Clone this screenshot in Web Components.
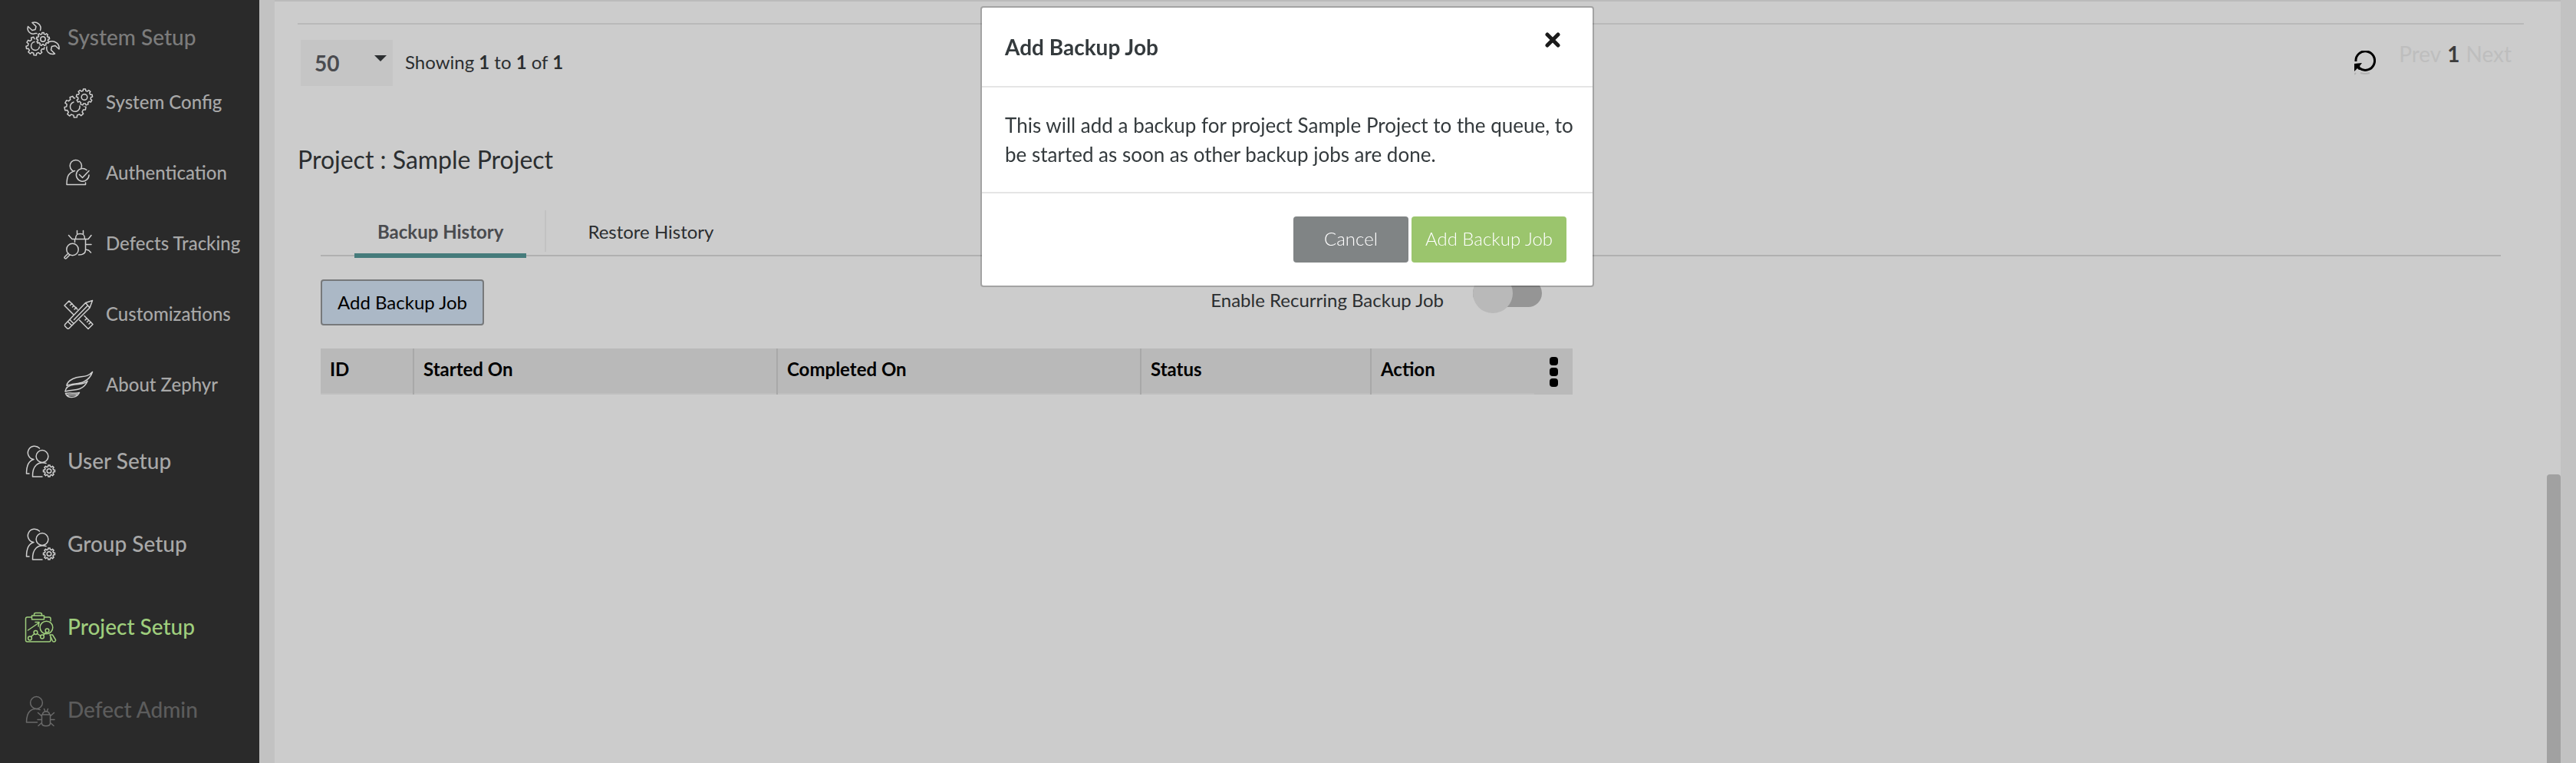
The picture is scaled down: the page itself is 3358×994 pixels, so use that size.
<!DOCTYPE html>
<html lang="en">
<head>
  <meta charset="UTF-8">
  <meta name="viewport" content="width=device-width, initial-scale=1.0">
  <title>Project Setup</title>
  <style>
    :root {
      --color-page: #ccc;
      --color-rail: #c2c2c2;
      --color-side: #2a2a2a;
      --color-side-text: #a8a8a8;
      --color-green: #9fce7d;
      --color-text: #2b2e30;
      --color-line: #b9b9b9;
      --fs-small: 24px;
      --fs-medium: 28px;
      --fs-large: 32px;
    }

    body {
      margin: 0;
      background-color: var(--color-page);
      color: var(--color-text);
      font-family: Lato, "Liberation Sans", sans-serif;
      font-size: var(--fs-small);
    }
  </style>
</head>
<body>
  <app-shell>
    <side-nav slot="nav">
      <nav-item icon="tools" class="first" style="--item-color: #7c7c7c">System Setup</nav-item>
      <nav-item icon="gears" sub>System Config</nav-item>
      <nav-item icon="auth" sub>Authentication</nav-item>
      <nav-item icon="defects" sub>Defects Tracking</nav-item>
      <nav-item icon="custom" sub>Customizations</nav-item>
      <nav-item icon="zephyr" sub>About Zephyr</nav-item>
      <nav-item icon="users">User Setup</nav-item>
      <nav-item icon="users">Group Setup</nav-item>
      <nav-item icon="project" style="--item-color: var(--color-green); --icon-color: var(--color-green)">Project Setup</nav-item>
      <nav-item icon="admin" style="--item-color: #5c5c5c; --icon-color: #6a6a6a">Defect Admin</nav-item>
    </side-nav>
    <list-pager></list-pager>
    <project-backups name="Sample Project">
      <tab-bar>
        <tab-item active>Backup History</tab-item>
        <tab-item>Restore History</tab-item>
      </tab-bar>
      <backup-toolbar></backup-toolbar>
      <backup-table></backup-table>
    </project-backups>
  </app-shell>

  <confirm-modal data-title="Add Backup Job">
    This will add a backup for project Sample Project to the queue, to be started as soon as other backup jobs are done.
  </confirm-modal>

  <script>
    const baseStyle = `
      :host,
      *,
      *::before,
      *::after {
        box-sizing: border-box;
      }

      *,
      *::before,
      *::after {
        margin: 0;
        padding: 0;
      }

      button,
      select {
        border: none;
        background: none;
        color: inherit;
        font: inherit;
        cursor: pointer;
      }
    `;

    function render(host, css, html) {
      const shadowRoot = host.attachShadow({ mode: "open" });
      shadowRoot.innerHTML = `<style>${baseStyle}${css}</style>${html}`;
      return shadowRoot;
    }

    // Outline of a cog wheel
    function gear(cx, cy, inner, outer, teeth, turn = 0) {
      const step = (Math.PI * 2) / teeth;
      const points = [];
      for (let i = 0; i < teeth; i++) {
        const mid = i * step + turn;
        [
          [inner, -0.3],
          [outer, -0.2],
          [outer, 0.2],
          [inner, 0.3],
        ].forEach(([r, offset]) => {
          const a = mid + offset * step;
          points.push(`${(cx + r * Math.cos(a)).toFixed(2)} ${(cy + r * Math.sin(a)).toFixed(2)}`);
        });
      }
      return `<path d="M${points.join("L")}Z"/>`;
    }

    const icons = {
      tools: `
        ${gear(14, 33, 9.5, 12, 9, 0.2)}
        <path d="M13 27.500a5.500 5.500 0 1 0 6.500 6"/>
        <circle class="gap" cx="24" cy="24" r="10.500"/>
        ${gear(24, 24, 6.8, 8.6, 9, -1.57)}
        <circle cx="24" cy="24" r="3.200"/>
        <path d="M10 2.500c6-2 13 3 10.500 10M4.500 7.500c-2 6 4 11.500 9.500 9h2M10 2.500l5 5-1 4-4 1-5.500-5"/>
        <path d="M32 27.500c7-3 14 3 13 9.500l-5-4.500-4.500 1-1 4.500 5 5c-7 2-12-3-10.500-9"/>`,
      gears: `
        ${gear(16, 25, 11.3, 14, 9, 0.15)}
        <path d="M14 19a6.300 6.300 0 1 0 8 5"/>
        <circle class="gap" cx="28" cy="12.500" r="12"/>
        ${gear(28, 12.5, 8.5, 10.6, 9, -1.57)}
        <circle cx="28" cy="12.500" r="3.800"/>`,
      auth: `
        <path d="M24 12.500a7.600 7.600 0 1 0-10 4.600C8 19 5 23 5 34.500h24.500V32M14 17.100l1.500-.6"/>
        <path d="M31 15.500a8.300 8.300 0 1 0 3 6.500"/>
        <path d="M21.500 21.500l4 4 8.500-9"/>`,
      defects: `
        <path d="M18.500 2.500v4M26.500 2.500v4M16.500 13.500c0-5 1.500-7 6-7s6 2 6 7M7.500 8.500l4.500 5h21l4-5M15.500 13.500v4M29.500 13.500v14c0 4-3 6.500-9 6.500M29.500 20.500H37M29.500 27l4 1 3 3"/>
        <circle cx="12.500" cy="27" r="7.700"/>
        <path d="M7 32l-4.500 4.500a1.200 1.200 0 0 0 2 2L9 34"/>`,
      custom: `
        <path d="M8 2L2 8l12 12M8 2l11 11M21.500 27L33 38.500l6-6L28 21.500M9.500 7.500l2.500-2M12.500 10l1.500-1.500M15 13l2.500-2.500M29 27l2-2M31.500 29.500l1.500-1.500M34 32l2.500-2.500"/>
        <path d="M38.500 1.500l-9 3L2.800 32.500a2 2 0 0 0 0 2.500l2.500 2.500a2 2 0 0 0 3 0L35 11zM29.500 4.500L35 11M6.500 29l5 5M9 26.500l5 5M14.500 26.500L31.500 9"/>`,
      zephyr: `
        <path d="M38.500 2.500C31 11 23 7 13 11.500 8 14 5 17 5 20.500c6-3 16-2 22-5s10-8 11.500-13z"/>
        <path d="M32 14.500c-4 4.500-10 3.500-17 4.500C8 20 3.500 22 3 28c7-2.500 13-1 19-3.500 5-2 8-5 10-10z"/>
        <path d="M21.500 29.500c-5 2-12-.5-18 1 1 3 4 5 8 5s8-2 10-6zM6 32.500c4 0 9 .5 12.500-.5"/>`,
      users: `
        <path d="M19.500 5a8.700 8.700 0 1 0-7.500 14.500C6 21 2.500 27 2.500 38H6"/>
        <circle cx="23" cy="15.500" r="7.900"/>
        <path d="M28 24.500c-10-3-18 3-17.500 17.500H23"/>
        ${gear(32, 34.5, 5.8, 7.6, 8)}
        <circle cx="32" cy="34.500" r="2.800"/>`,
      project: `
        <path d="M9 9H3.500a2 2 0 0 0-2 2v28a2 2 0 0 0 2 2H32a2 2 0 0 0 2-2v-4M26 9h6a2 2 0 0 1 2 2v3"/>
        <path d="M9.500 7h16v5h-16zM12.500 7V5.500a2 2 0 0 1 2-2h6a2 2 0 0 1 2 2V7"/>
        <path d="M4.500 26l14-9.500M14 15.500h5l-1 5.500"/>
        <circle cx="7" cy="36.500" r="2.400"/><circle cx="14.500" cy="29" r="2.400"/><circle cx="23" cy="34.500" r="2.400"/><circle cx="29.500" cy="26.500" r="2.400"/>
        <path d="M8.500 34.500l4.500-4M16.500 30.500l4.500 3M24.500 32.500l4-4"/>
        <circle cx="28.500" cy="22.500" r="8.300"/>
        <path d="M33 32l3.500 8c1 2 4.500 1 4-1.500l-4-6.500z"/>`,
      admin: `
        <circle cx="15.500" cy="12.500" r="7.900"/>
        <path d="M20 21.500C10 18 2.500 23 2.500 38h14"/>
        <path d="M25.500 20.500l1.500 3.500M30.500 20.500l-1.500 3.500M23.500 28c0-2.500 2-4 4.500-4s4.500 1.500 4.500 4zM22.500 28h11v11c0 5-11 5-11 0zM22.500 30l-5-4.500M33.500 30l5-4.500M22.500 34.500H17M33.500 34.500H39M22.500 38.500L18 42.500M33.500 38.500l4.500 4"/>`,
    };

    class AppShell extends HTMLElement {
      constructor() {
        super();
        render(this, `
          :host {
            min-height: 100vh;
            display: grid;
            grid-template-columns: 338px 1fr;
          }

          main {
            display: grid;
            grid-template-columns: 1fr 18px;
            border: solid var(--color-rail);
            border-width: 0 20px;
            box-shadow: inset 0 2px #bbb;
          }

          .panel {
            min-width: 0;
            padding: 30px 30px 0;
          }

          .rail {
            padding-top: 618px;
            display: flex;
          }

          .thumb {
            flex: 1;
            border-radius: 4px 4px 0 0;
            background-color: #a1a1a1;
          }
        `, `
          <slot name="nav"></slot>
          <main>
            <div class="panel"><slot></slot></div>
            <div class="rail"><div class="thumb"></div></div>
          </main>
        `);
      }
    }

    class SideNav extends HTMLElement {
      constructor() {
        super();
        render(this, `
          :host {
            display: block;
            background-color: var(--color-side);
          }
        `, `<nav aria-label="Administration"><slot></slot></nav>`);
      }
    }

    class NavItem extends HTMLElement {
      connectedCallback() {
        if (this.shadowRoot) return;
        const size = this.hasAttribute("sub") ? 40 : 46;
        render(this, `
          :host {
            display: block;
          }

          a {
            height: 108px;
            padding-left: 32px;
            display: flex;
            align-items: center;
            gap: 10px;
            color: var(--item-color, var(--color-side-text));
            font-size: var(--fs-medium);
            font-weight: 500;
            text-decoration: none;
          }

          :host(.first) a {
            height: 88px;
            padding-top: 12px;
          }

          :host([sub]) a {
            height: 92px;
            padding-left: 82px;
            gap: 16px;
            font-size: var(--fs-small);
          }

          span {
            padding-bottom: 4px;
          }

          svg {
            flex: none;
            fill: none;
            stroke: var(--icon-color, #cfcfcf);
            stroke-width: 1.5;
            stroke-linecap: round;
            stroke-linejoin: round;
          }

          .gap {
            fill: var(--color-side);
            stroke: none;
          }
        `, `
          <a href="#">
            <svg width="${size}" height="${size}" viewBox="0 0 ${size} ${size}" aria-hidden="true">${icons[this.getAttribute("icon")]}</svg>
            <span><slot></slot></span>
          </a>
        `);
      }
    }

    class ListPager extends HTMLElement {
      constructor() {
        super();
        render(this, `
          :host {
            padding: 20px 16px 0 4px;
            display: flex;
            align-items: center;
            border-top: 2px solid var(--color-line);
          }

          .size {
            display: grid;
            align-items: center;
            margin-right: 16px;
          }

          .size > * {
            grid-area: 1 / 1;
          }

          select {
            width: 120px;
            height: 60px;
            padding-left: 18px;
            appearance: none;
            background-color: #c5c5c5;
            color: #4a4b4f;
            font-size: var(--fs-medium);
            font-weight: 700;
          }

          .caret {
            justify-self: end;
            margin: 0 8px 12px 0;
            border: 8px solid transparent;
            border-top-color: var(--color-text);
            border-bottom: none;
            pointer-events: none;
          }

          p {
            padding-bottom: 4px;
          }

          .refresh {
            height: 32px;
            margin: 0 30px 0 auto;
          }

          .refresh svg {
            display: block;
          }

          .pages {
            align-self: flex-start;
            display: flex;
            gap: 8px;
            font-size: var(--fs-medium);
            line-height: 36px;
          }

          .pages button {
            color: #bebebe;
          }

          .pages strong {
            color: #3c3c3c;
          }
        `, `
          <div class="size">
            <select aria-label="Rows per page"><option>50</option></select>
            <span class="caret"></span>
          </div>
          <p>Showing <b>1</b> to <b>1</b> of <b>1</b></p>
          <button type="button" class="refresh" aria-label="Refresh">
            <svg width="28" height="32" viewBox="0 0 28 32">
              <path d="M2 14a12.300 12.300 0 1 1 5 9" fill="none" stroke="#000" stroke-width="3"/>
              <path d="M0 17l10-1-3 4 2 4-3 1-2-2-4 4z"/>
              <path d="M0 31l2-2M8 29q6 2 12 0" fill="none" stroke="#b4b4b4" stroke-width="2"/>
            </svg>
          </button>
          <div class="pages">
            <button type="button">Prev</button>
            <strong>1</strong>
            <button type="button">Next</button>
          </div>
        `);
      }
    }

    class ProjectBackups extends HTMLElement {
      connectedCallback() {
        if (this.shadowRoot) return;
        render(this, `
          :host {
            display: block;
          }

          h2 {
            margin-top: 76px;
            font-size: var(--fs-large);
            font-weight: 400;
            line-height: 40px;
          }

          section {
            padding: 46px 30px 0;
            display: flex;
            flex-direction: column;
            gap: 30px;
          }
        `, `
          <h2>Project : ${this.getAttribute("name")}</h2>
          <section><slot></slot></section>
        `);
      }
    }

    class TabBar extends HTMLElement {
      constructor() {
        super();
        render(this, `
          :host {
            height: 60px;
            padding-left: 44px;
            display: flex;
            border-bottom: 2px solid #b0b0b0;
          }
        `, `<slot></slot>`);
      }
    }

    class TabItem extends HTMLElement {
      constructor() {
        super();
        render(this, `
          :host {
            display: flex;
            align-items: flex-start;
          }

          button {
            height: 62px;
            padding: 0 30px 2px;
            border-bottom: 6px solid transparent;
          }

          :host([active]) button {
            border-color: #457b7b;
            color: #4a4b4f;
            font-weight: 700;
          }

          :host([active])::after {
            content: "";
            width: 2px;
            height: 54px;
            margin: 0 24px;
            background-color: #c2c2c2;
          }
        `, `<button type="button"><slot></slot></button>`);
      }
    }

    class BackupToolbar extends HTMLElement {
      constructor() {
        super();
        render(this, `
          :host {
            max-width: 1632px;
            padding-right: 40px;
            display: flex;
            align-items: flex-start;
          }

          .add {
            height: 60px;
            padding: 0 20px 2px;
            border: 2px solid #77797b;
            border-radius: 4px;
            background-color: #abb8c6;
            color: #000;
          }

          label {
            margin: 0 38px 0 auto;
            line-height: 54px;
          }

          input {
            width: 90px;
            height: 36px;
            appearance: none;
            display: flex;
            align-items: center;
            border-radius: 18px;
            background-color: #959595;
          }

          input::before {
            content: "";
            flex: none;
            width: 52px;
            height: 52px;
            border-radius: 50%;
            background-color: #b9b9b9;
          }

          input:checked {
            justify-content: flex-end;
          }
        `, `
          <button type="button" class="add">Add Backup Job</button>
          <label for="recurring">Enable Recurring Backup Job</label>
          <input type="checkbox" id="recurring">
        `);
        this.shadowRoot.querySelector(".add").addEventListener("click", () => {
          document.querySelector("confirm-modal").hidden = false;
        });
      }
    }

    class BackupTable extends HTMLElement {
      constructor() {
        super();
        render(this, `
          :host {
            display: block;
            max-width: 1632px;
          }

          table {
            width: 100%;
            table-layout: fixed;
            border-spacing: 0;
            background-color: var(--color-line);
            color: #000;
          }

          th {
            height: 60px;
            padding: 0 10px 8px 12px;
            border-right: 2px solid #a8a8a8;
            box-shadow: inset 0 -2px #bfbfbf;
            text-align: left;
          }

          th:nth-last-child(-n + 2) {
            border-right: none;
          }

          .id {
            width: 122px;
          }

          .date {
            width: 474px;
          }

          .status {
            width: 300px;
          }

          .menu {
            width: 50px;
            padding: 0;
            box-shadow: none;
          }

          button {
            width: 50px;
            height: 58px;
            display: flex;
            flex-direction: column;
            align-items: center;
            justify-content: center;
            gap: 3px;
          }

          i {
            width: 11px;
            height: 11px;
            border-radius: 4px;
            background-color: #000;
          }
        `, `
          <table>
            <thead>
              <tr>
                <th class="id">ID</th>
                <th class="date">Started On</th>
                <th class="date">Completed On</th>
                <th class="status">Status</th>
                <th>Action</th>
                <th class="menu"><button type="button" aria-label="Columns"><i></i><i></i><i></i></button></th>
              </tr>
            </thead>
          </table>
        `);
      }
    }

    class ConfirmModal extends HTMLElement {
      connectedCallback() {
        if (this.shadowRoot) return;
        const root = render(this, `
          :host {
            position: fixed;
            inset: 0;
            display: flex;
            align-items: flex-start;
            justify-content: center;
          }

          :host([hidden]) {
            display: none;
          }

          .modal {
            width: 800px;
            margin: 8px 2px 0 0;
            border: 2px solid rgba(0, 0, 0, 0.2);
            border-radius: 4px;
            background-color: #fff;
            background-clip: padding-box;
            color: #343a3d;
          }

          header {
            height: 104px;
            padding: 0 40px 0 30px;
            display: flex;
            align-items: center;
            justify-content: space-between;
            border-bottom: 2px solid #e5e5e5;
          }

          h3 {
            font-size: var(--fs-medium);
            font-weight: 700;
          }

          .close {
            margin-bottom: 18px;
          }

          .close svg {
            display: block;
          }

          p {
            padding: 30px 20px 30px 30px;
            font-size: 26px;
            line-height: 38px;
          }

          footer {
            padding: 30px 34px 30px 0;
            display: flex;
            justify-content: flex-end;
            gap: 4px;
            border-top: 2px solid #e5e5e5;
          }

          footer button {
            height: 60px;
            padding: 0 18px 4px;
            border-radius: 4px;
            background-color: #9bc56d;
            color: #fff;
            font-weight: 300;
          }

          footer .cancel {
            padding: 0 40px 4px;
            background-color: #808485;
          }
        `, `
          <div class="modal" role="dialog" aria-labelledby="title">
            <header>
              <h3 id="title">${this.dataset.title}</h3>
              <button type="button" class="close" aria-label="Close">
                <svg width="24" height="20" viewBox="0 0 24 20"><path d="M5 3l14 14M19 3L5 17" stroke="#1b1b1b" stroke-width="5" stroke-linecap="round"/></svg>
              </button>
            </header>
            <p><slot></slot></p>
            <footer>
              <button type="button" class="cancel">Cancel</button>
              <button type="button">${this.dataset.title}</button>
            </footer>
          </div>
        `);
        root.querySelectorAll("button").forEach((button) => {
          button.addEventListener("click", () => {
            this.hidden = true;
          });
        });
      }
    }

    customElements.define("app-shell", AppShell);
    customElements.define("side-nav", SideNav);
    customElements.define("nav-item", NavItem);
    customElements.define("list-pager", ListPager);
    customElements.define("project-backups", ProjectBackups);
    customElements.define("tab-bar", TabBar);
    customElements.define("tab-item", TabItem);
    customElements.define("backup-toolbar", BackupToolbar);
    customElements.define("backup-table", BackupTable);
    customElements.define("confirm-modal", ConfirmModal);
  </script>
</body>
</html>
